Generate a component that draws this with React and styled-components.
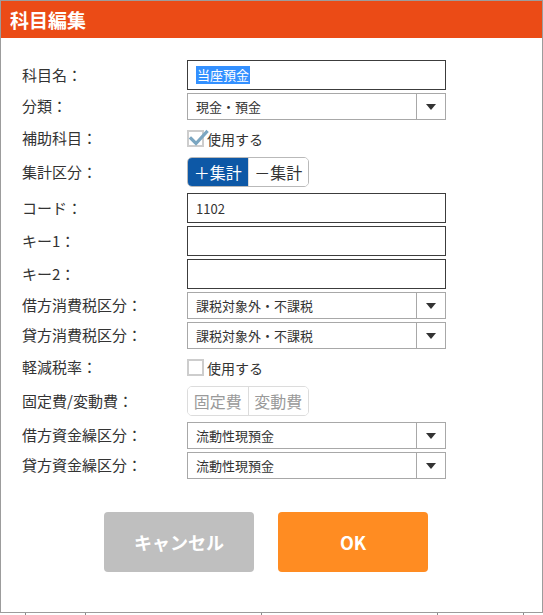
import React from 'react';
import styled, { createGlobalStyle } from 'styled-components';

const Global = createGlobalStyle`
  html, body { margin: 0; padding: 0; background: #fff; }
  body { font-family: "Noto Sans CJK JP", "Noto Sans", sans-serif; color: #333; }
  * { box-sizing: border-box; }
`;

const Dialog = styled.div`
  width: 543px;
  height: 613px;
  border: 1px solid #9c9c9c;
  background: #fff;
  display: flex;
  flex-direction: column;
`;

const TitleBar = styled.div`
  height: 37px;
  background: #eb4b16;
  color: #fff;
  font-weight: 700;
  font-size: 19px;
  line-height: 1;
  display: flex;
  align-items: center;
  padding-left: 9px;
`;

const Body = styled.div`
  padding: 22px 0 0 21px;
  display: flex;
  flex-direction: column;
`;

const Row = styled.div`
  display: grid;
  grid-template-columns: 165px 259px;
  align-items: center;
  height: ${p => p.$h}px;
  margin-bottom: ${p => p.$mb ?? 3}px;
`;

const Label = styled.div`
  font-size: 15px;
  color: #333;
  line-height: 1;
  white-space: nowrap;
  margin-top: -2px;
`;

const TextBox = styled.div`
  width: 259px;
  height: 30px;
  border: 1px solid #3c3c3c;
  background: #fff;
  padding-left: 8px;
  display: flex;
  align-items: center;
  font-size: 13px;
  color: #333;
`;

const Selected = styled.span`
  background: #3390ff;
  color: #fff;
  line-height: 18px;
  padding: 0 1px;
`;

const SelectBox = styled.div`
  width: 259px;
  height: 27px;
  border: 1px solid #a8a8a8;
  background: #fff;
  display: flex;
  align-items: stretch;
`;

const SelectText = styled.div`
  flex: 1;
  padding-left: 8px;
  display: flex;
  align-items: center;
  font-size: 13px;
  color: #333;
`;

const ArrowCell = styled.div`
  width: 29px;
  border-left: 1px solid #a8a8a8;
  display: flex;
  align-items: center;
  justify-content: center;
`;

const Triangle = styled.span`
  width: 0;
  height: 0;
  border-left: 5px solid transparent;
  border-right: 5px solid transparent;
  border-top: 6px solid #333;
`;

const CheckWrap = styled.label`
  display: flex;
  align-items: center;
  gap: 3px;
  font-size: 14px;
  color: #333;
`;

const CheckBoxFrame = styled.span`
  position: relative;
  width: 17px;
  height: 17px;
  border: 2px solid #cdcdcd;
  background: #fff;
  display: inline-block;
`;

const CheckMark = styled.svg`
  position: absolute;
  left: 0px;
  top: -4px;
  overflow: visible;
`;

const Toggle = styled.div`
  display: flex;
  height: 30px;
  width: 122px;
  border: 1px solid ${p => (p.$disabled ? '#dcdcdc' : '#b9b9b9')};
  border-radius: 5px;
  overflow: hidden;
  background: #fff;
`;

const Segment = styled.div`
  flex: 1;
  display: flex;
  align-items: center;
  justify-content: center;
  font-size: 16px;
  background: ${p => (p.$active ? '#0d58a6' : '#fff')};
  color: ${p => (p.$active ? '#fff' : p.$disabled ? '#9a9a9a' : '#333')};
  & + & {
    border-left: 1px solid ${p => (p.$disabled ? '#dcdcdc' : 'transparent')};
  }
`;

const Footer = styled.div`
  display: flex;
  gap: 24px;
  padding: 33px 0 0 103px;
`;

const Button = styled.button`
  width: 150px;
  height: 60px;
  border: none;
  border-radius: 4px;
  background: ${p => (p.$primary ? '#ff8c22' : '#bfbfbf')};
  color: #fff;
  font-family: "Noto Sans CJK JP", "Noto Sans", sans-serif;
  font-weight: 700;
  font-size: 18px;
  cursor: pointer;
`;

const Backdrop = styled.div`
  display: flex;
  height: 2px;
`;

const BackCell = styled.div`
  width: ${p => p.$w}px;
  border-left: ${p => (p.$first ? 'none' : '1px solid #8a8a8a')};
`;

const Select = ({ value }) => (
  <SelectBox>
    <SelectText>{value}</SelectText>
    <ArrowCell><Triangle /></ArrowCell>
  </SelectBox>
);

const Checkbox = ({ checked, label }) => (
  <CheckWrap>
    <CheckBoxFrame>
      {checked && (
        <CheckMark width="20" height="20" viewBox="0 0 20 20">
          <path d="M2 10.5 L7 15.5 L17.5 4" fill="none" stroke="#7ba6c1" strokeWidth="3.2" strokeLinecap="square" />
        </CheckMark>
      )}
    </CheckBoxFrame>
    {label}
  </CheckWrap>
);

export default function App() {
  return (
    <>
      <Global />
      <Dialog>
        <TitleBar>科目編集</TitleBar>
        <Body>
          <Row $h={30}>
            <Label>科目名：</Label>
            <TextBox><Selected>当座預金</Selected></TextBox>
          </Row>
          <Row $h={27}>
            <Label>分類：</Label>
            <Select value="現金・預金" />
          </Row>
          <Row $h={31}>
            <Label>補助科目：</Label>
            <Checkbox checked label="使用する" />
          </Row>
          <Row $h={30} $mb={6}>
            <Label>集計区分：</Label>
            <Toggle>
              <Segment $active>＋集計</Segment>
              <Segment>－集計</Segment>
            </Toggle>
          </Row>
          <Row $h={30}>
            <Label>コード：</Label>
            <TextBox>1102</TextBox>
          </Row>
          <Row $h={30}>
            <Label>キー1：</Label>
            <TextBox />
          </Row>
          <Row $h={30}>
            <Label>キー2：</Label>
            <TextBox />
          </Row>
          <Row $h={27}>
            <Label>借方消費税区分：</Label>
            <Select value="課税対象外・不課税" />
          </Row>
          <Row $h={27}>
            <Label>貸方消費税区分：</Label>
            <Select value="課税対象外・不課税" />
          </Row>
          <Row $h={31}>
            <Label>軽減税率：</Label>
            <Checkbox label="使用する" />
          </Row>
          <Row $h={30} $mb={6}>
            <Label>固定費/変動費：</Label>
            <Toggle $disabled>
              <Segment $disabled>固定費</Segment>
              <Segment $disabled>変動費</Segment>
            </Toggle>
          </Row>
          <Row $h={27}>
            <Label>借方資金繰区分：</Label>
            <Select value="流動性現預金" />
          </Row>
          <Row $h={27} $mb={0}>
            <Label>貸方資金繰区分：</Label>
            <Select value="流動性現預金" />
          </Row>
        </Body>
        <Footer>
          <Button>キャンセル</Button>
          <Button $primary>OK</Button>
        </Footer>
      </Dialog>
      <Backdrop>
        <BackCell $first $w={25} />
        <BackCell $w={60} />
        <BackCell $w={176} />
        <BackCell $w={176} />
        <BackCell $w={86} />
        <BackCell $w={20} />
      </Backdrop>
    </>
  );
}
